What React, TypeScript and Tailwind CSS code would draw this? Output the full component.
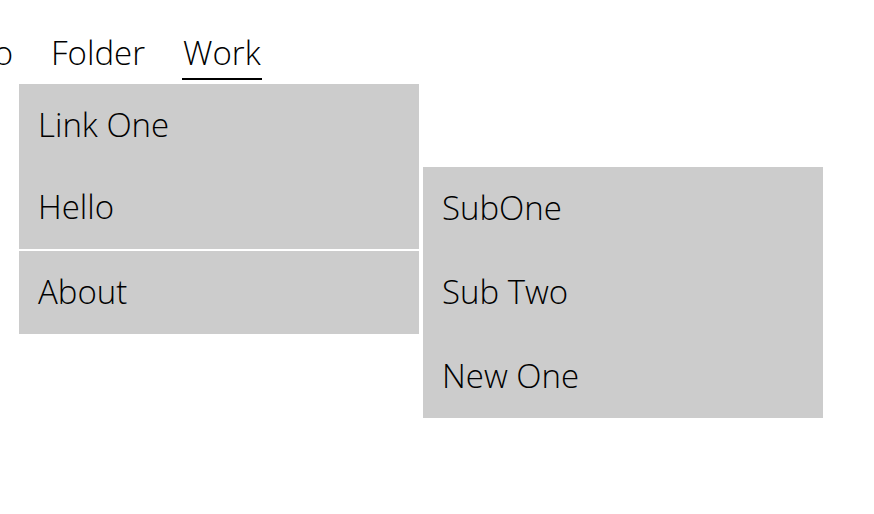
const mainLinks = [
  { label: 'Link One', h: 'h-[82.5px]' },
  { label: 'Hello', h: 'h-[82.5px]' },
];

const subLinks = ['SubOne', 'Sub Two', 'New One'];

export default function App() {
  return (
    <div className="relative h-[514px] w-full overflow-hidden bg-white text-black font-light text-[33px] [font-family:'Open_Sans',sans-serif]">
      {/* top nav — first item is cut off at the left edge */}
      <nav className="flex gap-[38px] pt-[30px] leading-[45px]">
        <div className="flex w-[13px] shrink-0 justify-end">
          <a className="whitespace-nowrap">Info</a>
        </div>
        <a className="whitespace-nowrap">Folder</a>
        <a className="whitespace-nowrap border-b-2 border-black pb-[3px] pr-[1px] -ml-[1px] pl-[1px]">Work</a>
      </nav>

      {/* dropdown */}
      <div className="absolute left-[19px] top-[84px] w-[400px]">
        <ul className="bg-[#cccccc]">
          {mainLinks.map(l => (
            <li key={l.label} className={`flex items-center pl-[19px] pb-[2px] leading-[45px] ${l.h}`}>
              {l.label}
            </li>
          ))}
          <li className="flex h-[85px] items-center border-t-2 border-white pl-[19px] pb-[2px] leading-[45px]">
            About
          </li>
        </ul>

        {/* submenu off "Hello" */}
        <ul className="absolute left-[404px] top-[83px] w-[400px] bg-[#cccccc]">
          {subLinks.map(s => (
            <li key={s} className="flex h-[83.67px] items-center pl-[19px] pb-[2px] leading-[45px]">
              {s}
            </li>
          ))}
        </ul>
      </div>
    </div>
  );
}
